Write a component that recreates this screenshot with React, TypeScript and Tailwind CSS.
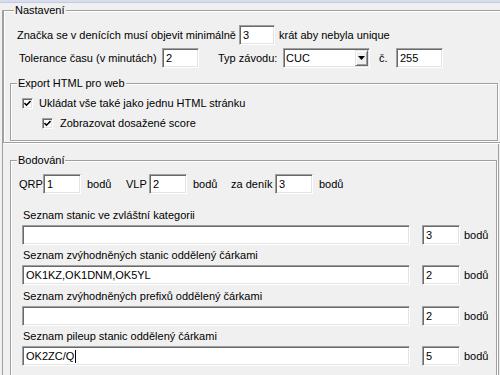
import React from "react";

const sunken =
	"border border-t-[#a0a0a0] border-l-[#a0a0a0] border-r-white border-b-white shadow-[inset_1px_1px_0_#696969,inset_-1px_-1px_0_#e3e3e3]";

const Edit = ({ className, value, caret }: { className: string; value?: string; caret?: boolean }): JSX.Element => (
	<div className={`h-[20px] shrink-0 bg-white ${sunken} flex items-center pl-[3px] leading-none ${className}`}>
		<span>{value}</span>
		{caret && <span className="w-[1px] h-[13px] bg-black ml-[1px]" />}
	</div>
);

const Check = (): JSX.Element => (
	<div className={`w-[11px] h-[11px] shrink-0 bg-white ${sunken} flex items-center justify-center`}>
		<svg width="7" height="7" viewBox="0 0 7 7">
			<path d="M0.5 3 L2.5 5.2 L6.5 1" fill="none" stroke="#000" strokeWidth="1.6" />
		</svg>
	</div>
);

const Legend = ({ text, left }: { text: string; left: string }): JSX.Element => (
	<span className={`absolute top-[-7px] ${left} bg-[#f0f0f0] px-[1px] leading-[13px]`}>{text}</span>
);

const groupBox = "relative box-border border border-[#a0a0a0] shadow-[inset_1px_1px_0_#fff,1px_1px_0_#fff]";

const ListRow = ({ label, value, points, caret, gap }: { label: string; value?: string; points: string; caret?: boolean; gap: string }): JSX.Element => (
	<div className={gap}>
		<div className="h-[13px] leading-[13px] pl-[12px]">{label}</div>
		<div className="flex items-center mt-[3px]">
			<Edit className="ml-[11px] w-[388px]" value={value} caret={caret} />
			<Edit className="ml-[12px] w-[38px]" value={points} />
			<span className="ml-[4px]">bodů</span>
		</div>
	</div>
);

const App: React.FC = (): JSX.Element => {
	return (
		<div className="w-[500px] h-[375px] overflow-hidden bg-[#f0f0f0] text-[11px] text-black font-['Liberation_Sans',Arial,sans-serif]">
			<div className="h-[3px] bg-[#d7ddef] border-b border-[#c3cbe0]" />
			<div className="ml-[2px] h-[372px] border-l border-[#a0a0a0]">
				{/* Nastavení */}
				<div className={`${groupBox} mt-[7px] w-[520px] h-[133px]`}>
					<Legend text="Nastavení" left="left-[10px]" />
					<div className="flex items-center h-[20px] mt-[14px]">
						<span className="w-[235px] pl-[13px]">Značka se v denících musí objevit minimálně</span>
						<Edit className="w-[36px]" value="3" />
						<span className="ml-[4px]">krát aby nebyla unique</span>
					</div>
					<div className="flex items-center h-[20px] mt-[3px]">
						<span className="w-[158px] pl-[15px]">Tolerance času (v minutách)</span>
						<Edit className="w-[37px]" value="2" />
						<span className="w-[84px] pl-[19px]">Typ závodu:</span>
						<div className={`h-[20px] w-[87px] shrink-0 bg-white ${sunken} flex items-center justify-between pl-[2px] pr-[1px]`}>
							<span>CUC</span>
							<div className="w-[13px] h-[16px] bg-[#f0f0f0] border border-t-[#e3e3e3] border-l-[#e3e3e3] border-r-[#696969] border-b-[#696969] shadow-[inset_1px_1px_0_#fff,inset_-1px_-1px_0_#a0a0a0] flex items-center justify-center">
								<svg width="7" height="4" viewBox="0 0 7 4">
									<path d="M0 0 H7 L3.5 4 Z" fill="#000" />
								</svg>
							</div>
						</div>
						<span className="w-[26px] pl-[9px]">č.</span>
						<Edit className="w-[47px]" value="255" />
					</div>

					{/* Export HTML pro web */}
					<div className={`${groupBox} mt-[15px] ml-[6px] w-[488px] h-[58px]`}>
						<Legend text="Export HTML pro web" left="left-[6px]" />
						<div className="flex items-center h-[11px] mt-[14px] pl-[11px]">
							<Check />
							<span className="ml-[6px]">Ukládat vše také jako jednu HTML stránku</span>
						</div>
						<div className="flex items-center h-[11px] mt-[9px] pl-[31px]">
							<Check />
							<span className="ml-[7px]">Zobrazovat dosažené score</span>
						</div>
					</div>
				</div>

				<div className="w-[496px] h-[240px] border-r border-[#a0a0a0]">
					<div className="h-[17px]" />
					{/* Bodování */}
					<div className={`${groupBox} ml-[7px] w-[487px] h-[230px]`}>
						<Legend text="Bodování" left="left-[6px]" />
						<div className="flex items-center h-[20px] mt-[13px] pl-[8px]">
							<span className="w-[24px]">QRP</span>
							<Edit className="w-[38px]" value="1" />
							<span className="w-[45px] pl-[6px]">bodů</span>
							<span className="w-[23px]">VLP</span>
							<Edit className="w-[38px]" value="2" />
							<span className="w-[44px] pl-[6px]">bodů</span>
							<span className="w-[44px]">za deník</span>
							<Edit className="w-[38px]" value="3" />
							<span className="pl-[6px]">bodů</span>
						</div>
						<ListRow gap="mt-[15px]" label="Seznam stanic ve zvláštní kategorii" points="3" />
						<ListRow gap="mt-[4px]" label="Seznam zvýhodněných stanic oddělený čárkami" value="OK1KZ,OK1DNM,OK5YL" points="2" />
						<ListRow gap="mt-[5px]" label="Seznam zvýhodněných prefixů oddělený čárkami" points="2" />
						<ListRow gap="mt-[4px]" label="Seznam pileup stanic oddělený čárkami" value="OK2ZC/Q" points="5" caret />
					</div>
				</div>
			</div>
		</div>
	);
};

export default App;
